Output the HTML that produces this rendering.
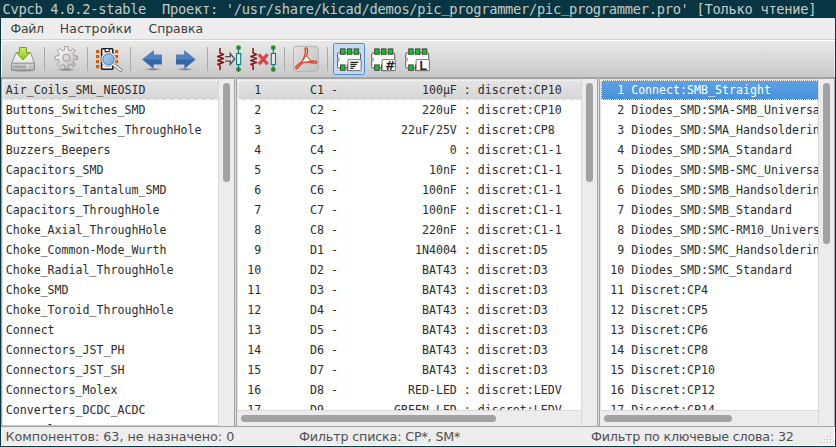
<!DOCTYPE html>
<html><head><meta charset="utf-8"><title>Cvpcb</title>
<style>
html,body{margin:0;padding:0;}
body{width:836px;height:447px;overflow:hidden;background:#073642;position:relative;font-family:"DejaVu Sans","Liberation Sans",sans-serif;}
body>div,body>svg{position:absolute;}
#title{left:2.5px;top:0;height:19px;line-height:19px;color:#c4cac6;font-family:"DejaVu Sans Mono","Liberation Mono",monospace;font-size:13.7px;letter-spacing:-0.263px;white-space:pre;}
#title u{text-decoration:none;position:relative;top:-2px;}
#win{left:1px;top:18px;width:834px;height:428px;background:#e8e8e8;}
#menu{left:1px;top:18px;width:834px;height:21px;background:#ededed;border-bottom:1px solid #d2d2d2;font-size:12.4px;color:#3e3e3e;}
#menu span{position:absolute;top:0;line-height:21px;}
#tb{left:1px;top:40px;width:834px;height:37px;background:linear-gradient(#fff 0,#fff 1px,#e9e9e9 1px,#c8c8c8 100%);box-shadow:inset 1px 0 0 #fff,inset -1px 0 0 #ececec;}
.sep{position:absolute;top:8px;width:1px;height:22px;background:#b0b0b0;}
#pb{left:1px;top:77px;width:834px;height:350px;background:#a4a4a4;}
.panel{top:79px;height:347px;background:#fff;overflow:hidden;box-shadow:inset 1px 1px 0 #e2e2e2;}
.list{position:absolute;left:1px;top:1px;overflow:hidden;font-family:"DejaVu Sans Mono","Liberation Mono",monospace;font-size:11.627px;color:#2c2c2c;white-space:pre;}
.r{height:20px;line-height:20px;box-sizing:border-box;padding-left:2.2px;width:calc(100% + 3px);}
#pl .r{padding-left:2.7px;}
.s0{background:linear-gradient(#e4e4e4,#d6d6d6);outline:1px dotted #fff;outline-offset:-1px;}
.s1{background:linear-gradient(#5fa2e6,#4a90d9);color:#fff;outline:1px dotted #fff;outline-offset:-1px;}
.vs{position:absolute;top:0;width:15px;bottom:0;background:#ececec;border-left:1px solid #dadada;}
.vt{position:absolute;left:4px;width:7px;border-radius:4px;background:#a2a2a2;}
.hs{position:absolute;left:0;bottom:0;height:15px;background:#ececec;border-top:1px solid #dadada;}
.ht{position:absolute;top:4px;height:7px;border-radius:4px;background:#a2a2a2;}
#status{left:1px;top:427px;width:834px;height:19px;background:#ededed;box-shadow:inset -1px -1px 0 #fff;font-size:12.7px;color:#505050;}
#status i{position:absolute;width:1px;height:1px;background:#bcbcbc;box-shadow:1px 1px 0 #fff;}
#status span{position:absolute;top:0;line-height:19px;white-space:pre;}
</style></head><body>
<div id="title">Cvpcb 4.0.2-stable  Проект: '/usr/share/kicad/demos/pic<u>_</u>programmer/pic<u>_</u>programmer.pro' [Только чтение]</div>
<div id="win"></div>
<div id="menu"><span style="left:9.5px;letter-spacing:-0.25px">Файл</span><span style="left:58.8px;letter-spacing:0.22px">Настройки</span><span style="left:147.5px">Справка</span></div>
<div id="tb">
<svg style="position:absolute;left:-1px;top:0" width="836" height="37" viewBox="0 40 836 37">
<defs>
<linearGradient id="gDrv" x1="0" y1="0" x2="0" y2="1"><stop offset="0" stop-color="#fafafa"/><stop offset="1" stop-color="#d4d4d4"/></linearGradient>
<linearGradient id="gDrvF" x1="0" y1="0" x2="0" y2="1"><stop offset="0" stop-color="#d2d2d2"/><stop offset="1" stop-color="#b2b2b2"/></linearGradient>
<linearGradient id="gGrn" x1="0" y1="0" x2="0" y2="1"><stop offset="0" stop-color="#d6ee5a"/><stop offset="1" stop-color="#8ac22a"/></linearGradient>
<linearGradient id="gGear" x1="0" y1="0" x2="1" y2="1"><stop offset="0" stop-color="#ffffff"/><stop offset=".4" stop-color="#e8e8e8"/><stop offset="1" stop-color="#a6a6a6"/></linearGradient>
<radialGradient id="gSh"><stop offset="0" stop-color="#000" stop-opacity=".45"/><stop offset="1" stop-color="#000" stop-opacity="0"/></radialGradient>
<linearGradient id="gLens" x1="0" y1="0" x2="1" y2="1"><stop offset="0" stop-color="#b6cfea"/><stop offset="1" stop-color="#78a4d6"/></linearGradient>
<linearGradient id="gPdf" x1="0" y1="0" x2="1" y2="1"><stop offset="0" stop-color="#e4e4e2"/><stop offset=".5" stop-color="#d2d2d0"/><stop offset="1" stop-color="#c2c2c0"/></linearGradient>
<g id="res" fill="none" stroke="#8c1414" stroke-width="1.5" stroke-linejoin="round">
 <path d="M220 48 V53 L223.5 54.5 L217.7 56.5 L223.5 58.5 L217.7 60.5 L223.5 62.5 L217.7 64.2 L220 65.2 V70"/>
</g>
<g id="cmp">
 <path d="M238.5 48 V53 M238.5 65 V70" stroke="#1a5fa8" stroke-width="1.1" fill="none"/>
 <rect x="236.5" y="53.5" width="4.2" height="11" fill="#e6e6e6" stroke="#008488" stroke-width="1.1"/>
 <circle cx="238.5" cy="47.7" r="1.75" fill="#2a6a50" stroke="#1fa41f" stroke-width="1.35"/>
 <circle cx="238.5" cy="69.5" r="1.75" fill="#2a6a50" stroke="#1fa41f" stroke-width="1.35"/>
</g>
<g id="chip">
 <rect x="337.5" y="52.9" width="23" height="15" rx="1.2" fill="#fff" stroke="#5a5a5a" stroke-width="1"/>
 <path d="M337.6 57.6 a1.7 1.9 0 0 1 0 3.8" fill="#d8d8d8" stroke="#777" stroke-width=".8"/>
 <g fill="#0cc81c" stroke="#474747" stroke-width="1">
  <rect x="340.5" y="48.9" width="4.5" height="5.4"/><rect x="347.3" y="48.9" width="4.5" height="5.4"/><rect x="354.1" y="48.9" width="4.5" height="5.4"/>
  <rect x="340.5" y="64.9" width="4.5" height="5.4"/><rect x="347.3" y="64.9" width="4.5" height="5.4"/>
 </g>
 <rect x="348.3" y="60" width="13" height="11.2" rx=".8" fill="#000" opacity=".18"/>
 <rect x="347.9" y="59.6" width="13.2" height="11" rx=".8" fill="#fff" stroke="#6a6a6a" stroke-width=".9"/>
</g>
</defs>
<!-- separators -->
<g fill="#a9a9a9"><rect x="44" y="47" width="1" height="24"/><rect x="87" y="47" width="1" height="24"/><rect x="130" y="47" width="1" height="24"/><rect x="207" y="47" width="1" height="24"/><rect x="284" y="47" width="1" height="24"/><rect x="327" y="47" width="1" height="24"/></g>
<!-- save -->
<ellipse cx="23" cy="70.5" rx="12.5" ry="1.6" fill="url(#gSh)"/>
<path d="M16.3 52.5 H30.6 L34.5 63.5 V69 a1.2 1.2 0 0 1 -1.2 1.2 H12.7 a1.2 1.2 0 0 1 -1.2 -1.2 V63.5 Z" fill="url(#gDrv)" stroke="#8e8e8e" stroke-width="1"/>
<rect x="11.5" y="63.2" width="23" height="7" rx="1.2" fill="url(#gDrvF)" stroke="#8c8c8c" stroke-width="1"/>
<rect x="13.6" y="65.4" width="12" height="2.6" fill="#a4a4a4" opacity=".85"/><rect x="27" y="64.4" width="1" height="4.6" fill="#e4e4e4"/>
<path d="M19.5 47.6 H26.5 V52.8 H29.6 L23 60 L16.4 52.8 H19.5 Z" fill="url(#gGrn)" stroke="#6aa01e" stroke-width="1" stroke-linejoin="round"/>
<!-- gear -->
<ellipse cx="66.3" cy="69.6" rx="10" ry="1.8" fill="url(#gSh)"/>
<path id="gearp" fill="url(#gGear)" stroke="#a39a9a" stroke-width="1" stroke-linejoin="round" fill-rule="evenodd" d="M64.48 49.91 L64.61 46.53 L67.99 46.53 L68.12 49.91 L70.52 50.90 L73.01 48.61 L75.39 50.99 L73.10 53.48 L74.09 55.88 L77.47 56.01 L77.47 59.39 L74.09 59.52 L73.10 61.92 L75.39 64.41 L73.01 66.79 L70.52 64.50 L68.12 65.49 L67.99 68.87 L64.61 68.87 L64.48 65.49 L62.08 64.50 L59.59 66.79 L57.21 64.41 L59.50 61.92 L58.51 59.52 L55.13 59.39 L55.13 56.01 L58.51 55.88 L59.50 53.48 L57.21 50.99 L59.59 48.61 L62.08 50.90 Z M62.80 57.70 a3.50 3.50 0 1 0 7.00 0 a3.50 3.50 0 1 0 -7.00 0 Z"/>
<!-- magnifier -->
<g fill="#e05a00"><rect x="96" y="50" width="3.2" height="3.2"/><rect x="96" y="55" width="3.2" height="3.2"/><rect x="96" y="60" width="3.2" height="3.2"/><rect x="96" y="65" width="3.2" height="3.2"/>
<rect x="115" y="50" width="3.2" height="3.2"/><rect x="115" y="55" width="3.2" height="3.2"/><rect x="115" y="60" width="3.2" height="3.2"/><rect x="115" y="65" width="3.2" height="3.2"/></g>
<rect x="101.6" y="48.7" width="11.2" height="20.6" rx=".9" fill="#f4f4f4" stroke="#1e1e1e" stroke-width="1.5"/>
<path d="M105.2 49 V51.6 H109.2 V49" fill="#fff" stroke="#1e1e1e" stroke-width="1.1"/>
<path d="M113.5 64.5 L120.8 70.2" stroke="#6e6e6e" stroke-width="3.4" stroke-linecap="round"/>
<path d="M113.5 64.5 L120.8 70.2" stroke="#f0f0f0" stroke-width="2" stroke-linecap="round"/>
<circle cx="108.5" cy="59.4" r="6.6" fill="url(#gLens)" stroke="#fff" stroke-width="1.4"/><circle cx="108.5" cy="59.4" r="5.7" fill="none" stroke="#3f74b8" stroke-width="1"/>
<circle cx="108.5" cy="59.4" r="7.4" fill="none" stroke="#8a8f96" stroke-width=".6"/>
<!-- arrows -->
<ellipse cx="153" cy="69.3" rx="9" ry="1.6" fill="url(#gSh)"/>
<ellipse cx="185" cy="69.3" rx="9" ry="1.6" fill="url(#gSh)"/>
<path d="M142.3 59.6 L153.6 50.5 V54.8 H161.8 V64.6 H153.6 V68.7 Z" fill="#3565a6"/>
<path d="M142.3 59.6 L153.6 50.5 V54.8 H161.8 V59.6 Z" fill="#4b82c4"/>
<path d="M195.6 59.6 L184.4 50.5 V54.8 H176.1 V64.6 H184.4 V68.7 Z" fill="#3565a6"/>
<path d="M195.6 59.6 L184.4 50.5 V54.8 H176.1 V59.6 Z" fill="#4b82c4"/>
<!-- resistor -> component -->
<use href="#res"/><use href="#cmp"/>
<path d="M225.2 56.6 H230.3 V53.4 L234.6 58.9 L230.3 64.4 V61.2 H225.2" fill="none" stroke="#4c4c4c" stroke-width="1.3"/>
<use href="#res" transform="translate(33.1 0)"/><use href="#cmp" transform="translate(34.8 0)"/>
<path d="M258.8 54.4 L267.6 64.3 M267.6 54.4 L258.8 64.3" stroke="#d4343c" stroke-width="3.2" fill="none" opacity=".9"/>
<!-- pdf -->
<rect x="293.5" y="46.3" width="24.8" height="25" rx="3.2" fill="url(#gPdf)" stroke="#b2b2b0" stroke-width="1"/>
<path d="M306 47.8 C308.4 47.8 307.6 53 306.6 56.4 C308.4 60 311.4 61.6 314.4 61.2 C317.4 60.9 317 63.4 314.8 63.2 C311.6 63 307.8 61.6 305 61.9 C302 62.3 300.4 64.6 298.6 67 C296.8 69.4 294.6 68.6 296.2 66.4 C298 64 301.4 63 302.8 60.2 C304.4 57 305.6 53 305.2 50.4 C305 48.6 305.2 47.8 306 47.8 Z" fill="none" stroke="#e2391b" stroke-width="1.3" stroke-linejoin="round"/>
<path d="M306.3 55.6 L311 61.6 L301.6 62.2 Z" fill="#fff" stroke="#e2391b" stroke-width=".9" stroke-linejoin="round"/>
<!-- modules -->
<rect x="333.5" y="43.5" width="31" height="31" rx="1" fill="#c5dbf3" stroke="#4a90d9" stroke-width="1"/>
<use href="#chip"/>
<g stroke="#222" stroke-width="1.1" fill="none"><path d="M350.4 62.4 H358.4 M350.4 64.4 H356.8 M350.4 66.4 H355.4 M350.4 68.4 H353.6"/></g>
<use href="#chip" transform="translate(34.2 0)"/>
<text x="389.3" y="70.2" text-anchor="middle" font-family="'DejaVu Sans','Liberation Sans',sans-serif" font-weight="bold" font-style="italic" font-size="13" fill="#222">#</text>
<use href="#chip" transform="translate(68.2 0)"/>
<text x="423.3" y="69.6" text-anchor="middle" font-family="'Liberation Sans','DejaVu Sans',sans-serif" font-weight="bold" font-size="12.3" fill="#1c1c1c">L</text>
</svg>

</div>
<div id="pb"></div>
<div class="panel" id="pl" style="left:2px;width:232px;">
 <div class="list" style="width:215px;height:345px"><div class="r s0">Air_Coils_SML_NEOSID</div><div class="r">Buttons_Switches_SMD</div><div class="r">Buttons_Switches_ThroughHole</div><div class="r">Buzzers_Beepers</div><div class="r">Capacitors_SMD</div><div class="r">Capacitors_Tantalum_SMD</div><div class="r">Capacitors_ThroughHole</div><div class="r">Choke_Axial_ThroughHole</div><div class="r">Choke_Common-Mode_Wurth</div><div class="r">Choke_Radial_ThroughHole</div><div class="r">Choke_SMD</div><div class="r">Choke_Toroid_ThroughHole</div><div class="r">Connect</div><div class="r">Connectors_JST_PH</div><div class="r">Connectors_JST_SH</div><div class="r">Connectors_Molex</div><div class="r">Converters_DCDC_ACDC</div><div class="r">Crystals</div></div><div style="position:absolute;left:0;top:346px;width:216px;height:1px;background:#c6c6c6"></div>
 <div class="vs" style="left:216px"><div class="vt" style="top:4px;height:99px"></div></div>
</div>
<div style="left:235px;top:78px;width:1px;height:348px;background:#dcdcdc"></div>
<div class="panel" style="left:237px;width:360px;">
 <div class="list" style="width:343px;height:330px"><div class="r s0">  1       C1 -            100µF : discret:CP10</div><div class="r">  2       C2 -            220uF : discret:CP10</div><div class="r">  3       C3 -         22uF/25V : discret:CP8</div><div class="r">  4       C4 -                0 : discret:C1-1</div><div class="r">  5       C5 -             10nF : discret:C1-1</div><div class="r">  6       C6 -            100nF : discret:C1-1</div><div class="r">  7       C7 -            100nF : discret:C1-1</div><div class="r">  8       C8 -            220nF : discret:C1-1</div><div class="r">  9       D1 -           1N4004 : discret:D5</div><div class="r"> 10       D2 -            BAT43 : discret:D3</div><div class="r"> 11       D3 -            BAT43 : discret:D3</div><div class="r"> 12       D4 -            BAT43 : discret:D3</div><div class="r"> 13       D5 -            BAT43 : discret:D3</div><div class="r"> 14       D6 -            BAT43 : discret:D3</div><div class="r"> 15       D7 -            BAT43 : discret:D3</div><div class="r"> 16       D8 -          RED-LED : discret:LEDV</div><div class="r"> 17       D9 -        GREEN-LED : discret:LEDV</div></div>
 <div class="vs" style="left:344px"><div class="vt" style="top:4px;height:99px"></div></div>
 <div class="hs" style="width:344px"><div class="ht" style="left:4px;width:255px"></div></div>
</div>
<div style="left:598px;top:78px;width:1px;height:348px;background:#dcdcdc"></div>
<div class="panel" style="left:600px;width:234px;">
 <div class="list" style="width:217px;height:330px"><div class="r s1">  1 Connect:SMB_Straight</div><div class="r">  2 Diodes_SMD:SMA-SMB_Universal_Handsoldering</div><div class="r">  3 Diodes_SMD:SMA_Handsoldering</div><div class="r">  4 Diodes_SMD:SMA_Standard</div><div class="r">  5 Diodes_SMD:SMB-SMC_Universal_Handsoldering</div><div class="r">  6 Diodes_SMD:SMB_Handsoldering</div><div class="r">  7 Diodes_SMD:SMB_Standard</div><div class="r">  8 Diodes_SMD:SMC-RM10_Universal_Handsoldering</div><div class="r">  9 Diodes_SMD:SMC_Handsoldering</div><div class="r"> 10 Diodes_SMD:SMC_Standard</div><div class="r"> 11 Discret:CP4</div><div class="r"> 12 Discret:CP5</div><div class="r"> 13 Discret:CP6</div><div class="r"> 14 Discret:CP8</div><div class="r"> 15 Discret:CP10</div><div class="r"> 16 Discret:CP12</div><div class="r"> 17 Discret:CP14</div></div>
 <div class="vs" style="left:218px"><div class="vt" style="top:4px;height:161px"></div></div>
 <div class="hs" style="width:218px"><div class="ht" style="left:4px;width:128px"></div></div>
</div>
<div id="status"><span style="left:4.5px">Компонентов: 63, не назначено: 0</span><span style="left:298px;letter-spacing:-0.15px">Фильтр списка: CP*, SM*</span><span style="left:590px;letter-spacing:-0.19px">Фильтр по ключевые слова: 32</span><i style="left:829px;top:6px"></i><i style="left:826px;top:9px"></i><i style="left:829px;top:9px"></i><i style="left:823px;top:12px"></i><i style="left:826px;top:12px"></i><i style="left:829px;top:12px"></i><i style="left:820px;top:15px"></i><i style="left:823px;top:15px"></i><i style="left:826px;top:15px"></i><i style="left:829px;top:15px"></i></div>
</body></html>
